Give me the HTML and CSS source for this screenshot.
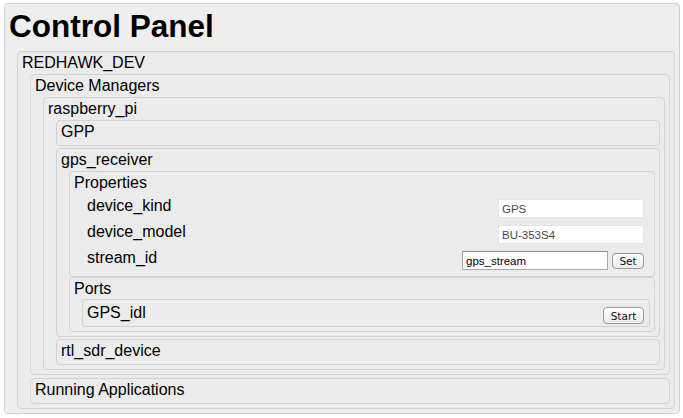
FILE: index.html
```html
<!DOCTYPE html>
<html>
<head>
<meta charset="utf-8">
<title>Control Panel</title>
<link rel="stylesheet" href="styles.css">
</head>
<body>
<div class="panel">
  <h1 class="title">Control Panel</h1>
  <div class="children">
    <div class="node">
      <div class="label">REDHAWK_DEV</div>
      <div class="children">
        <div class="node">
          <div class="label">Device Managers</div>
          <div class="children">
            <div class="node">
              <div class="label">raspberry_pi</div>
              <div class="children">
                <div class="node">
                  <div class="label">GPP</div>
                </div>
                <div class="node">
                  <div class="label">gps_receiver</div>
                  <div class="children">
                    <div class="node section">
                      <div class="label">Properties</div>
                      <div class="children rows">
                        <div class="row">
                          <div class="label">device_kind</div>
                          <div class="controls"><input class="field readonly" type="text" value="GPS" readonly></div>
                        </div>
                        <div class="row">
                          <div class="label">device_model</div>
                          <div class="controls"><input class="field readonly" type="text" value="BU-353S4" readonly></div>
                        </div>
                        <div class="row">
                          <div class="label">stream_id</div>
                          <div class="controls"><input class="field editable" type="text" value="gps_stream"><button class="btn btn-set" type="button">Set</button></div>
                        </div>
                      </div>
                    </div>
                    <div class="node section ports">
                      <div class="label">Ports</div>
                      <div class="children">
                        <div class="row port-row">
                          <div class="label">GPS_idl</div>
                          <div class="controls"><button class="btn btn-start" type="button">Start</button></div>
                        </div>
                      </div>
                    </div>
                  </div>
                </div>
                <div class="node">
                  <div class="label">rtl_sdr_device</div>
                </div>
              </div>
            </div>
          </div>
        </div>
        <div class="node running">
          <div class="label">Running Applications</div>
        </div>
      </div>
    </div>
  </div>
</div>
</body>
</html>
```
FILE: styles.css
```css
html, body {
  margin: 0;
  padding: 0;
  background: #ffffff;
}

body {
  font-family: "Liberation Sans", Arial, Helvetica, sans-serif;
  color: #000;
}

.panel {
  margin: 3px 3px 0 4px;
  border: 1px solid #cfcfcf;
  border-radius: 4px;
  background: #eeeeee;
  padding: 0 4px 4px 0;
}

.title {
  margin: 0 0 7px 0;
  padding: 4px 0 0 4px;
  font-family: "Liberation Sans", Arial, Helvetica, sans-serif;
  font-weight: bold;
  font-size: 31.5px;
  line-height: 36px;
  color: #000;
}

.children {
  padding-left: 12px;
}

.node {
  border: 1px solid #d3d3d3;
  border-radius: 4px;
  background: #ebebeb;
  padding: 0 4px 4px 0;
  margin-top: 2px;
}

.panel > .children > .node {
  margin-top: 0;
}

.label {
  font-size: 16px;
  line-height: 18px;
  padding: 2px 4px 0 4px;
  white-space: nowrap;
}

.ports {
  margin-top: 0;
}

.running {
  margin-top: 3px;
}

.row {
  display: flex;
  align-items: flex-start;
  box-sizing: border-box;
  height: 26px;
  border: 1px solid transparent;
  padding: 0 4px 4px 0;
}

.rows > .row:first-child {
  margin-top: 2px;
}

.port-row {
  height: 28px;
  margin-top: 1px;
  border: 1px solid #d3d3d3;
  border-radius: 3px;
  background: #ebebeb;
}

.port-row .label {
  padding-top: 4px;
}

.controls {
  margin-left: auto;
  margin-right: 1px;
  margin-top: 4px;
  display: flex;
  align-items: center;
  gap: 4px;
}

.port-row .controls {
  margin-top: 7px;
}

.field {
  box-sizing: border-box;
  width: 146px;
  height: 19px;
  margin: 0;
  padding: 0 3px;
  font-family: "Liberation Sans", Arial, sans-serif;
  font-size: 11.5px;
  line-height: 17px;
  background: #ffffff;
  outline: none;
}

.readonly {
  border: 1px solid #e4e4e4;
  color: #4a4a4a;
}

.editable {
  border: 1px solid #a8a8a8;
  border-top-color: #8c8c8c;
  color: #000;
}

.btn {
  box-sizing: border-box;
  height: 16px;
  margin: 0;
  padding: 0;
  font-family: "DejaVu Sans", "Liberation Sans", sans-serif;
  font-size: 10.5px;
  line-height: 14px;
  color: #111;
  border: 1px solid #9a9a9a;
  border-radius: 4px;
  background: linear-gradient(#ffffff, #ebebeb);
}

.btn-set {
  width: 32px;
}

.btn-start {
  width: 41px;
  height: 17px;
}
```
